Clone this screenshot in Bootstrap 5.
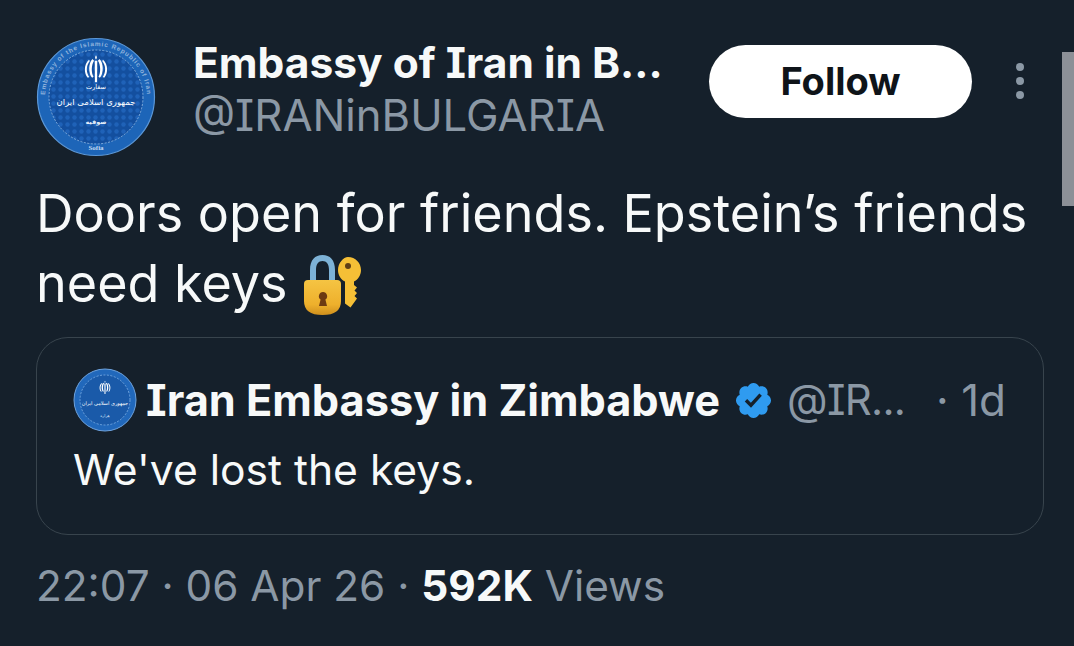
<!doctype html>
<html lang="en">
<head>
<meta charset="utf-8">
<title>Tweet</title>
<link href="https://cdn.jsdelivr.net/npm/bootstrap@5.3.0/dist/css/bootstrap.min.css" rel="stylesheet">
<style>
html,body{height:100%;}
body{background:#15202b;color:#f7f9f9;font-family:Inter,Roboto,"Liberation Sans",sans-serif;overflow:hidden;font-feature-settings:"cv08" 1;}
.tw-page{width:1074px;height:646px;padding:37px 30px 0 36px;position:relative;}
.tw-head{height:118px;}
.tw-avatar{width:120px;height:120px;flex:none;}
.tw-names{margin-left:37px;width:516px;flex:none;padding-top:1px;}
.tw-name{font-size:42.5px;line-height:50px;font-weight:700;white-space:nowrap;}
.tw-handle{font-size:43.6px;line-height:50px;color:#8b98a5;white-space:nowrap;margin-top:3px;}
.tw-follow.btn{width:263px;height:73px;flex:none;border-radius:37px;background:#fff;border:0;color:#0f1419;font-size:38px;font-weight:700;margin-top:8px;padding:0;}
.tw-dots{width:8px;margin-left:44px;margin-top:26px;gap:6px;}
.tw-dots span{display:block;width:8px;height:8px;border-radius:50%;background:#8b98a5;}
.tw-text{font-size:52.1px;line-height:70px;margin-top:24px;white-space:nowrap;color:#f7f9f9;}
.tw-emoji{width:62px;height:62px;vertical-align:-13px;}
.tw-quote{width:1008px;height:198px;margin-top:18px;border:1px solid #38444d;border-radius:32px;padding:34px 36px 0;}
.tw-qhead{height:56px;}
.tw-qavatar{width:64px;height:64px;flex:none;margin-right:9px;}
.tw-qname{font-size:43.3px;font-weight:700;line-height:50px;white-space:nowrap;}
.tw-badge{width:41px;height:41px;margin-left:13px;flex:none;}
.tw-qhandle{font-size:42px;letter-spacing:-.7px;color:#8b98a5;line-height:50px;margin-left:13px;white-space:nowrap;}
.tw-qtime{font-size:44px;color:#8b98a5;line-height:50px;margin-left:auto;margin-right:1px;white-space:nowrap;}
.tw-qtext{font-size:42.6px;line-height:50px;margin-top:17px;}
.tw-meta{font-size:42.3px;line-height:50px;color:#8b98a5;margin-top:26px;white-space:nowrap;}
.tw-meta b{color:#f7f9f9;font-weight:700;}
.tw-scroll{position:absolute;right:0;top:52px;width:12px;height:154px;background:#8c9097;}
</style>
</head>
<body>
<div class="tw-page">
  <svg width="0" height="0" class="position-absolute">
    <defs>
      <path id="crest" d="M0-19c1.5 2 1.500 4 0 5.500C-1.500-15-1.500-17 0-19zM-1.600-12h3.200L1.400 15q-1.400 1.500-2.800 0zM-4.500-14c-5.500 5-5.500 19-.5 24l1.800-1.500c-3-5-3-15 .7-20.500zM4.500-14c5.500 5 5.500 19 .5 24l-1.800-1.500c3-5 3-15-.7-20.500zM-9-13c-7 6-6.500 18-1.500 23l1.800-1c-4-6-4.300-14 .7-20.500zM9-13c7 6 6.500 18 1.500 23l-1.800-1c4-6 4.300-14-.7-20.500z"/>
    </defs>
  </svg>
  <div class="d-flex align-items-start tw-head">
    <svg class="tw-avatar" viewBox="0 0 120 120" role="img" aria-label="Embassy emblem">
      <defs>
        <pattern id="mosaic" width="7" height="7" patternUnits="userSpaceOnUse"><rect width="7" height="7" fill="#134f9f"/><circle cx="3.500" cy="3.500" r="2.200" fill="#1f62b8"/></pattern>
        <path id="ringtop" d="M9 60a51 51 0 0 1 102 0"/>
      </defs>
      <circle cx="60" cy="60" r="58.500" fill="#1d65b8" stroke="#5c98d8" stroke-width="1.200"/>
      <circle cx="60" cy="60" r="47" fill="url(#mosaic)" stroke="#7fabdc" stroke-width="1" stroke-dasharray="2 1.500"/>
      <text font-size="6.500" font-weight="700" fill="#8fb3dc" font-family="Liberation Sans,sans-serif" textLength="155"><textPath href="#ringtop" startOffset="2">Embassy of the Islamic Republic of Iran</textPath></text>
      <use href="#crest" transform="translate(60 33) scale(.78)" fill="#fff"/>
      <text x="60" y="52" text-anchor="middle" font-size="6.500" fill="#fff" font-family="DejaVu Sans,sans-serif" direction="rtl">سفارت</text>
      <text x="60" y="68" text-anchor="middle" font-size="8.500" fill="#fff" font-family="DejaVu Sans,sans-serif" direction="rtl">جمهوری اسلامی ایران</text>
      <text x="60" y="87" text-anchor="middle" font-size="6.500" font-weight="700" fill="#e4eefa" font-family="DejaVu Sans,sans-serif" direction="rtl">صوفیه</text>
      <text x="60" y="113" text-anchor="middle" font-size="7" font-weight="700" fill="#c4d8f0" font-family="Liberation Serif,serif">Sofia</text>
    </svg>
    <div class="tw-names">
      <div class="tw-name">Embassy of Iran in B...</div>
      <div class="tw-handle">@IRANinBULGARIA</div>
    </div>
    <button type="button" class="btn tw-follow">Follow</button>
    <div class="d-flex flex-column tw-dots"><span></span><span></span><span></span></div>
  </div>
  <div class="tw-text">Doors open for friends. Epstein’s friends<br>need keys
    <svg class="tw-emoji" viewBox="0 0 62 62" role="img" aria-label="locked with key">
      <defs><linearGradient id="lockbody" x1="0" y1="0" x2="0" y2="1"><stop offset="0" stop-color="#f5c443"/><stop offset=".7" stop-color="#eeb02c"/><stop offset="1" stop-color="#cf8f1d"/></linearGradient></defs>
      <path d="M8 29V17C8 7 13 2 20.500 2S33 7 33 17v12h-6V17c0-6-2.500-9-6.500-9S14 11 14 17v12z" fill="#7db2d6"/>
      <path d="M2 31q0-4 4-4h29q4 0 4 4v17q0 14-18.500 14T2 48z" fill="url(#lockbody)"/>
      <path d="M21 39a4.200 4.200 0 0 1 2.400 7.600L25 53h-8l1.600-6.400A4.200 4.200 0 0 1 21 39z" fill="#6d3a12"/>
      <path d="M46 4c7.500 0 13 6 13 13 0 5.500-3 9.500-7 11.500V32l3 2.500-2.500 3 2.500 2.500-2.500 3 2.500 2.500-6.500 9-5.500-4V28.500c-4-2-7-6-7-11.500 0-7 5.500-13 10-13z" fill="#f5bf36"/>
      <circle cx="46" cy="13" r="3" fill="#5f3f16"/>
    </svg>
  </div>
  <div class="tw-quote">
    <div class="d-flex align-items-center tw-qhead">
      <svg class="tw-qavatar" viewBox="0 0 64 64" role="img" aria-label="Embassy emblem">
        <circle cx="32" cy="32" r="31" fill="#2168bb" stroke="#6ea2dc" stroke-width="1"/>
        <circle cx="32" cy="32" r="25" fill="#1a5aa9" stroke="#6ea2dc" stroke-width="1" stroke-dasharray="2 1.500"/>
        <use href="#crest" transform="translate(32 20) scale(.38)" fill="#fff"/>
        <text x="32" y="37" text-anchor="middle" font-size="5" fill="#fff" font-family="DejaVu Sans,sans-serif" direction="rtl">جمهوری اسلامی ایران</text>
        <text x="32" y="49" text-anchor="middle" font-size="4" fill="#dbe8f8" font-family="DejaVu Sans,sans-serif" direction="rtl">هراره</text>
      </svg>
      <span class="tw-qname">Iran Embassy in Zimbabwe</span>
      <svg class="tw-badge" viewBox="0 0 24 24" role="img" aria-label="Verified">
        <path fill="#2f9bf0" d="M22.250 12c0-1.430-.880-2.670-2.190-3.340.46-1.390.2-2.900-.81-3.910s-2.520-1.270-3.910-.81c-.66-1.310-1.910-2.190-3.340-2.190s-2.670.88-3.330 2.190c-1.400-.46-2.910-.2-3.920.81s-1.260 2.520-.8 3.910c-1.310.67-2.200 1.910-2.200 3.340s.89 2.670 2.200 3.340c-.46 1.390-.21 2.900.8 3.910s2.520 1.260 3.910.81c.67 1.310 1.910 2.190 3.340 2.190s2.680-.88 3.340-2.190c1.390.45 2.900.2 3.910-.81s1.270-2.520.81-3.910c1.310-.67 2.190-1.910 2.190-3.340z"/>
        <path fill="#15202b" d="m10.540 16.200-3.650-3.650 1.410-1.420 2.170 2.170 4.950-5.400 1.470 1.350z"/>
      </svg>
      <span class="tw-qhandle">@IR...</span>
      <span class="tw-qtime">· 1d</span>
    </div>
    <div class="tw-qtext">We've lost the keys.</div>
  </div>
  <div class="tw-meta">22:07 · 06 Apr 26 · <b>592K</b> Views</div>
  <div class="tw-scroll"></div>
</div>
<script src="https://cdn.jsdelivr.net/npm/bootstrap@5.3.0/dist/js/bootstrap.bundle.min.js"></script>
</body>
</html>
